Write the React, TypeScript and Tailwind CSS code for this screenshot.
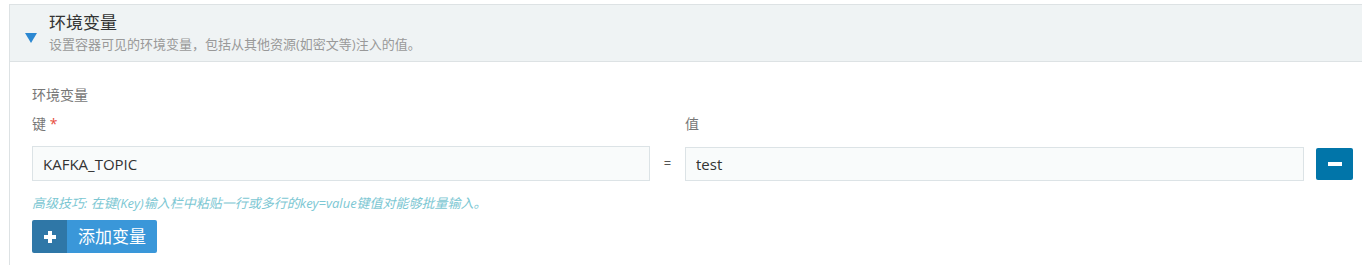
import React, { useState } from 'react';

const font = { fontFamily: '"Open Sans", "Noto Sans CJK SC", sans-serif' };

type EnvVar = { key: string; value: string };

const App: React.FC = () => {
    const [vars, setVars] = useState<EnvVar[]>([{ key: 'KAFKA_TOPIC', value: 'test' }]);

    const update = (i: number, field: keyof EnvVar, v: string) => {
        setVars(vars.map((item, idx) => (idx === i ? { ...item, [field]: v } : item)));
    };

    return (
        <div className="w-[1362px] h-[265px] bg-white pt-[4px] pl-[9px] overflow-hidden" style={font}>
            <div className="border-l border-t border-[#dde2e4] h-full">
                {/* Header */}
                <div className="h-[57px] bg-[#eff3f4] border-b border-[#dde2e4] flex items-center pl-[15px]">
                    <svg width="12" height="10" viewBox="0 0 12 10" className="mt-[9px]">
                        <polygon points="0,0 12,0 6,10" fill="#2c88d2" />
                    </svg>
                    <div className="ml-[12px] flex flex-col">
                        <div className="text-[17px] leading-[20px] text-[#333]">环境变量</div>
                        <div className="text-[13px] leading-[18px] text-[#999] mt-[2px]">
                            设置容器可见的环境变量，包括从其他资源(如密文等)注入的值。
                        </div>
                    </div>
                </div>

                {/* Body */}
                <div className="pl-[22px] pt-[24px]">
                    <div className="text-[14px] leading-[18px] text-[#777]">环境变量</div>
                    <div className="flex mt-[11px] text-[14px] leading-[18px] text-[#777]">
                        <div className="w-[618px]">
                            键 <span className="text-[#e74c3c]">*</span>
                        </div>
                        <div className="ml-[35px]">值</div>
                    </div>
                    {vars.map((v, i) => (
                        <div key={i} className="flex items-center mt-[13px]">
                            <input
                                value={v.key}
                                onChange={e => update(i, 'key', e.target.value)}
                                className="w-[618px] h-[35px] px-[10px] bg-[#f9fbfb] border border-[#dce3e6] text-[15px] text-[#333] outline-none"
                            />
                            <span className="w-[35px] text-center text-[13px] text-[#555]">=</span>
                            <input
                                value={v.value}
                                onChange={e => update(i, 'value', e.target.value)}
                                className="w-[619px] h-[34px] px-[10px] bg-[#f9fbfb] border border-[#dce3e6] text-[15px] text-[#333] outline-none"
                            />
                            <button
                                type="button"
                                onClick={() => setVars(vars.filter((_, idx) => idx !== i))}
                                className="ml-[12px] w-[37px] h-[32px] bg-[#0175a9] rounded-[2px] flex items-center justify-center"
                            >
                                <span className="block w-[14px] h-[4px] bg-white" />
                            </button>
                        </div>
                    ))}
                    <div className="mt-[14px] text-[13px] leading-[16px] italic text-[#7cc7d3]">
                        高级技巧: 在键(Key)输入栏中粘贴一行或多行的key=value键值对能够批量输入。
                    </div>
                    <button
                        type="button"
                        onClick={() => setVars([...vars, { key: '', value: '' }])}
                        className="mt-[9px] flex h-[33px] rounded-[2px] overflow-hidden"
                    >
                        <span className="w-[35px] bg-[#2f77a7] flex items-center justify-center">
                            <svg width="12" height="12" viewBox="0 0 12 12">
                                <rect x="4" y="0" width="4" height="12" fill="#fff" />
                                <rect x="0" y="4" width="12" height="4" fill="#fff" />
                            </svg>
                        </span>
                        <span className="w-[90px] bg-[#3a97d9] text-white text-[17px] flex items-center justify-center">
                            添加变量
                        </span>
                    </button>
                </div>
            </div>
        </div>
    );
};

export default App;
